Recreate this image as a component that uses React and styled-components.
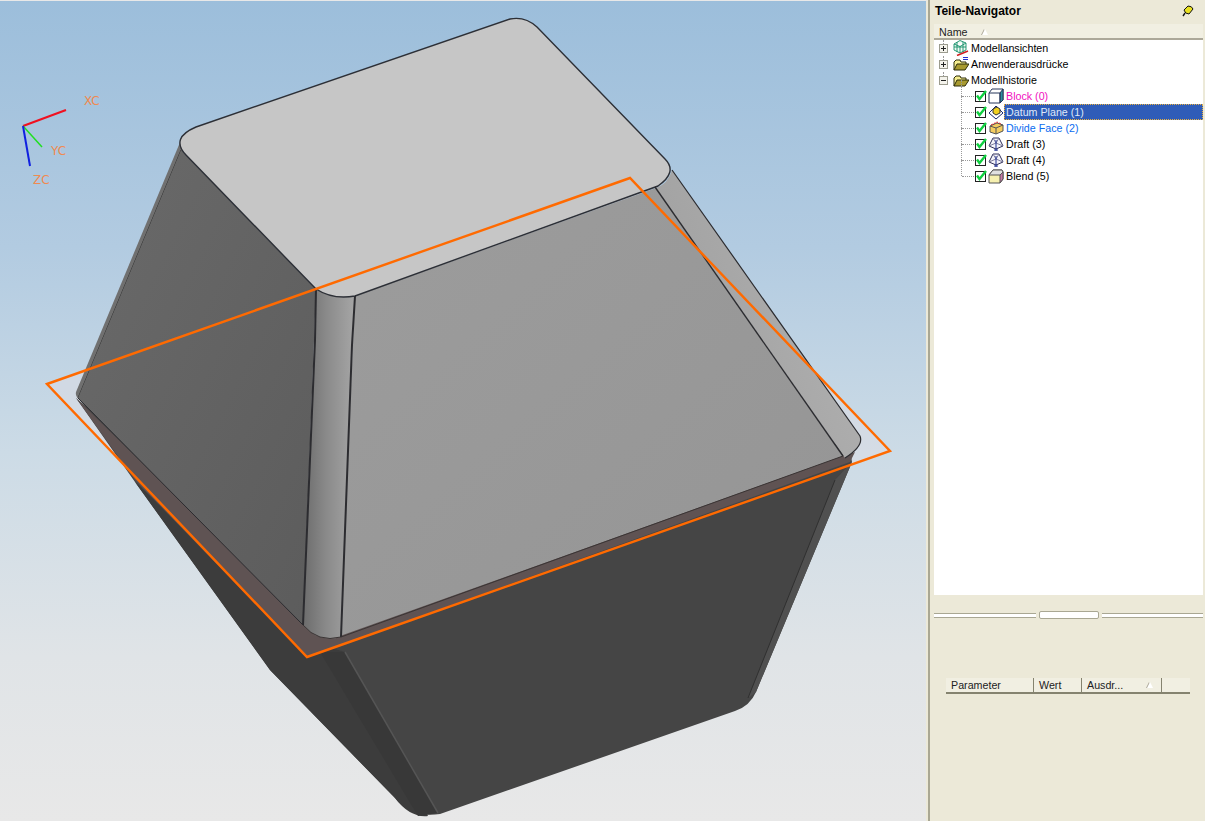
import styled, { createGlobalStyle } from "styled-components";

const GlobalStyle = createGlobalStyle`
  html, body {
    margin: 0;
    padding: 0;
    overflow: hidden;
    background: #ece9d8;
  }
`;

const Page = styled.div`
  display: flex;
  width: 1205px;
  height: 821px;
  font-family: Tahoma, "Liberation Sans", Arial, sans-serif;
  font-size: 10.7px;
  color: #000;
`;

const Viewport = styled.div`
  flex: 0 0 928px;
  height: 821px;
  border-top: 1px solid #e8e8e8;
  border-right: 2px solid #ece9d8;
  box-sizing: border-box;
`;

const Panel = styled.aside`
  flex: 1;
  display: flex;
  flex-direction: column;
  padding: 0 2px 0 4px;
  border-left: 2px solid #a9a793;
  background: #ece9d8;
  box-sizing: border-box;
`;

const TitleBar = styled.div`
  flex: 0 0 24px;
  display: flex;
  align-items: center;
  justify-content: space-between;
  padding: 0 9px 3px 1px;
  box-sizing: border-box;
  font-weight: 700;
  font-size: 12px;
`;

const ColumnHeader = styled.div`
  flex: 0 0 16px;
  display: flex;
  align-items: center;
  gap: 14px;
  padding: 1px 0 0 5px;
  box-sizing: border-box;
  border-bottom: 2px solid #aca899;
  background: #f1efe2;
  color: #222;
`;

const SortMark = styled.span`
  width: 0;
  height: 0;
  border-left: 3px solid transparent;
  border-right: 3px solid transparent;
  border-bottom: 6px solid #fff;
  filter: drop-shadow(-1px 0 0 #aca899);
`;

const Tree = styled.div`
  flex: 0 0 555px;
  background: #fff;
`;

const Row = styled.div`
  position: relative;
  display: flex;
  align-items: center;
  height: 16px;
  padding-left: ${(p) => (p.$child ? 41 : 5)}px;

  &::before {
    content: "";
    position: absolute;
    left: ${(p) => (p.$child ? 27 : 9)}px;
    top: ${(p) => (p.$child ? -8 : 0)}px;
    height: ${(p) => (p.$last ? 16 : p.$child ? 24 : 8)}px;
    border-left: 1px dotted #9a9a9a;
  }

  &::after {
    content: "";
    position: absolute;
    left: 28px;
    top: 8px;
    width: 12px;
    border-top: ${(p) => (p.$child ? "1px dotted #9a9a9a" : "none")};
  }
`;

const Expander = styled.span`
  position: relative;
  z-index: 1;
  flex: 0 0 9px;
  width: 9px;
  height: 9px;
  margin-right: 5px;
  box-sizing: border-box;
  border: 1px solid #9c9c8f;
  background: #f4f3ec;
  display: flex;
  align-items: center;
  justify-content: center;

  &::before {
    content: "";
    width: 5px;
    height: 1px;
    background: #222;
  }

  &::after {
    content: "";
    display: ${(p) => (p.$open ? "none" : "block")};
    position: absolute;
    left: 3px;
    top: 1px;
    width: 1px;
    height: 5px;
    background: #222;
  }
`;

const IconSlot = styled.span`
  flex: 0 0 16px;
  width: 16px;
  height: 16px;
  margin-right: ${(p) => (p.$tight ? 0 : 2)}px;
  display: block;

  svg {
    display: block;
  }
`;

const Label = styled.span`
  flex: ${(p) => (p.$selected ? 1 : "0 0 auto")};
  height: ${(p) => (p.$selected ? 16 : 14)}px;
  line-height: 14px;
  padding: 0 ${(p) => (p.$selected ? 2 : 0)}px;
  box-sizing: border-box;
  white-space: nowrap;
  color: ${(p) => p.$color || "#000"};
  background: ${(p) => (p.$selected ? "#2f5cb8" : "transparent")};
  outline: ${(p) => (p.$selected ? "1px dotted #e8b040" : "none")};
  outline-offset: -1px;
  ${(p) => (p.$selected ? "color: #dfe8f8; padding-top: 1px;" : "")}
`;

const Sash = styled.div`
  flex: 0 0 auto;
  display: flex;
  align-items: center;
  gap: 3px;
  margin-top: 16px;
  height: 8px;
`;

const SashLine = styled.div`
  flex: 1;
  height: 3px;
  border-top: 1px solid #a9a793;
  border-bottom: 1px solid #a9a793;
  background: #fff;
`;

const SashHandle = styled.div`
  flex: 0 0 58px;
  height: 6px;
  border: 1px solid #a9a793;
  border-radius: 2px;
  background: #fff;
`;

const TableHeader = styled.div`
  display: flex;
  margin: 59px 13px 0 12px;
  height: 16px;
  border-bottom: 2px solid #85836f;
  box-sizing: border-box;
`;

const HeaderCell = styled.div`
  flex: 0 0 ${(p) => p.$width}px;
  display: flex;
  align-items: center;
  justify-content: space-between;
  padding: 0 8px 0 5px;
  box-sizing: border-box;
  background: #f1efe2;
  border-right: ${(p) => (p.$end ? "none" : "1px solid #85836f")};
  color: #222;
`;

const Check = () => (
  <svg width="12" height="12" viewBox="0 0 12 12" style={{ flex: "0 0 12px", marginRight: 1 }}>
    <rect x="0.5" y="1.5" width="10" height="10" fill="#fff" stroke="#222" />
    <path d="M2 5.5 L4.5 9 L11 1" fill="none" stroke="#10d040" strokeWidth="2.4" />
  </svg>
);

const Svg = ({ children }) => (
  <svg width="16" height="16" viewBox="0 0 16 16">
    {children}
  </svg>
);

const ViewsIcon = () => (
  <Svg>
    <path
      d="M1 4 L7 0.5 L13 3 L13 10 L7 13 L1 10 Z M1 4 L7 6.5 L13 3 M7 6.5 L7 13 M4 2 L4 12 M10 2 L10 12 M1 7 L13 7"
      fill="#eefaf4"
      stroke="#14906a"
      strokeWidth="0.9"
    />
    <path d="M4 15.5 L15 11" stroke="#d02020" strokeWidth="1.6" />
  </Svg>
);

const FolderIcon = ({ lines }) => (
  <Svg>
    <path d="M1 14 L1 6 L3 4 L7 4 L8 6 L13 6 L13 8" fill="#f6ee90" stroke="#2c2c08" />
    <path d="M1 14 L4 8 L16 8 L12 14 Z" fill="#a89a30" stroke="#2c2c08" />
    {lines && <path d="M10 1.5 H15 M10 3.5 H15" stroke="#2030d0" />}
  </Svg>
);

const BlockIcon = () => (
  <Svg>
    <path d="M1 5 L4 1 L15 1 L15 12 L12 15 L1 15 Z" fill="#fff" stroke="#26365a" />
    <path d="M12 5 L15 1 L15 12 L12 15 Z" fill="#2a90a0" stroke="#26365a" />
    <path d="M1 5 L12 5 L12 15" fill="none" stroke="#26365a" />
  </Svg>
);

const DatumIcon = () => (
  <Svg>
    <path d="M1 9 L8 2 L15 9 L8 15 Z" fill="#fff" stroke="#1a2a70" />
    <path d="M5 5 L9 3 L12 5 L12 9 L8 11 L5 9 Z" fill="#f0d020" stroke="#333" />
  </Svg>
);

const DivideIcon = () => (
  <Svg>
    <path d="M2 6 L9 3 L15 5 L15 11 L8 14 L2 12 Z" fill="#f4cc60" stroke="#555" />
    <path d="M2 6 L8 8 L15 5 M8 8 L8 14" fill="none" stroke="#555" />
    <path d="M3 5 L9 2 L13 4" fill="none" stroke="#e02020" strokeDasharray="2 1" />
  </Svg>
);

const DraftIcon = () => (
  <Svg>
    <path d="M5 2 L11 2 L15 10 L8 13 L1 10 Z" fill="#f4f4fa" stroke="#30305a" />
    <path d="M5 2 L8 7 L11 2 M8 7 L1 10 M8 7 L15 10" fill="none" stroke="#8080a0" />
    <path d="M8 4 L8 15 M6 14 L10 14" stroke="#1a2a90" />
  </Svg>
);

const BlendIcon = () => (
  <Svg>
    <path d="M1 7 L5 2 L14 2 L15 4 L15 11 L12 15 L1 15 Z" fill="#f6f0b0" stroke="#555" />
    <path d="M5 2 L14 2 L15 4 L12 7 L1 7 Z" fill="#e0e0e0" stroke="#555" />
    <path d="M12 7 L15 4 L15 11 L12 15 Z" fill="#c878a8" stroke="#555" />
  </Svg>
);

const PinIcon = () => (
  <svg width="12" height="12" viewBox="0 0 12 12">
    <path d="M2 5 L6 1 Q10 1 11 4 L7 9 Q3 9 2 5 Z" fill="#e8e020" stroke="#111" />
    <path d="M3 8 L1 11" stroke="#111" strokeWidth="1.4" />
  </svg>
);

const rootRows = [
  { label: "Modellansichten", icon: <ViewsIcon /> },
  { label: "Anwenderausdrücke", icon: <FolderIcon lines /> },
  { label: "Modellhistorie", icon: <FolderIcon />, open: true },
];

const featureRows = [
  { label: "Block (0)", icon: <BlockIcon />, color: "#f010c0" },
  { label: "Datum Plane (1)", icon: <DatumIcon />, selected: true },
  { label: "Divide Face (2)", icon: <DivideIcon />, color: "#0a6cf0" },
  { label: "Draft (3)", icon: <DraftIcon /> },
  { label: "Draft (4)", icon: <DraftIcon /> },
  { label: "Blend (5)", icon: <BlendIcon />, last: true },
];

function Model() {
  return (
    <svg width="926" height="820" viewBox="0 1 926 820" style={{ display: "block" }}>
      <defs>
        <linearGradient id="sky" x1="0" y1="0" x2="0" y2="1">
          <stop offset="0" stopColor="#9cbedb" />
          <stop offset="0.3" stopColor="#b2cbe1" />
          <stop offset="0.55" stopColor="#ccdbe6" />
          <stop offset="0.8" stopColor="#e0e4e7" />
          <stop offset="1" stopColor="#e8e8e8" />
        </linearGradient>
        <linearGradient id="edgeStrip" x1="0" y1="0" x2="1" y2="0">
          <stop offset="0" stopColor="#6c6c6c" />
          <stop offset="0.45" stopColor="#8a8a8a" />
          <stop offset="1" stopColor="#a6a6a6" />
        </linearGradient>
        <linearGradient id="rightStrip" x1="0" y1="0" x2="1" y2="-0.5">
          <stop offset="0" stopColor="#a4a4a4" />
          <stop offset="0.7" stopColor="#b2b2b2" />
          <stop offset="1" stopColor="#8c8c8c" />
        </linearGradient>
        <linearGradient id="leftFace" x1="0" y1="0" x2="1" y2="1">
          <stop offset="0" stopColor="#6a6a6a" />
          <stop offset="1" stopColor="#5c5c5c" />
        </linearGradient>
        <linearGradient id="frontFace" x1="0" y1="0" x2="1" y2="1">
          <stop offset="0" stopColor="#9c9c9c" />
          <stop offset="1" stopColor="#959595" />
        </linearGradient>
      </defs>
      <rect x="0" y="0" width="926" height="821" fill="url(#sky)" />

      {/* datum plane fill behind the part */}
      <path d="M47 384 L630 178 L890 451 L307 657 Z" fill="#dcdce4" fillOpacity="0.55" />

      {/* lower body */}
      <path
        d="M76 398 L135 482 L270 670 L395 798 Q410 818 440 814 L735 711 Q750 706 756 692 L852 462 L848 440 L320 600 Z"
        fill="#454545"
      />
      <path d="M135 482 L270 670 L395 798 Q410 818 428 816 L345 652 L305 640 Z" fill="#3c3c3c" />
      <path d="M320 652 L345 652 L438 813 L418 816 Z" fill="#383838" />
      <path d="M345 652 L438 813" stroke="#555" strokeWidth="1.5" fill="none" />
      <path d="M835 480 L748 698 L756 692 L852 462 Z" fill="#505050" />
      <path d="M835 480 L748 698" stroke="#303030" strokeWidth="1" fill="none" />

      {/* brown band under the blend */}
      <path d="M76 398 L135 480 L307 657 L850 462 L855 452 L340 630 L302 620 Z" fill="#5f5353" />

      {/* side sliver on the left */}
      <path d="M181 140 L76 392 Q75 397 80 400 L190 160 Z" fill="#707070" />
      <path d="M181 150 L78 398" stroke="#333" strokeWidth="1" fill="none" />

      {/* left facet */}
      <path d="M181 150 L316 289 L303 625 L78 398 Z" fill="url(#leftFace)" />

      {/* front facet */}
      <path d="M355 296 L656 188 L843 456 L340 636 Z" fill="url(#frontFace)" />

      {/* blended edges */}
      <path d="M316 289 Q335 300 355 296 L341 637 Q318 643 303 625 Z" fill="url(#edgeStrip)" />
      <path d="M672 170 L860 436 Q864 446 845 458 L656 188 Q668 184 672 170 Z" fill="url(#rightStrip)" />

      {/* top face */}
      <path
        d="M196 127 L510 19 Q525 16 537 27 L665 159 Q678 172 658 186 L355 296 Q333 300 316 289 L186 155 Q170 138 196 127 Z"
        fill="#c6c6c6"
        stroke="#2c2f36"
        strokeWidth="1.4"
      />

      {/* feature lines */}
      <g fill="none" stroke="#2c2c30">
        <path d="M316 289 L315 340 L303 625" strokeWidth="2" />
        <path d="M355 296 L352 345 L341 637" strokeWidth="2" />
        <path d="M655 187 L843 456" strokeWidth="1.4" />
        <path d="M672 170 L860 436 Q864 446 845 458" strokeWidth="1.2" />
        <path d="M78 398 L303 625" strokeWidth="1" />
        <path d="M303 625 Q318 643 341 637 L843 456" strokeWidth="1" stroke="#3a3434" />
      </g>

      {/* datum plane outline */}
      <path d="M47 384 L630 178 L890 451 L307 657 Z" fill="none" stroke="#ff6a00" strokeWidth="2.4" />

      {/* triad */}
      <g fill="none" strokeWidth="2">
        <path d="M23 126 L66 110" stroke="#f01020" />
        <path d="M23 126 L42 147" stroke="#20e020" strokeWidth="1.5" />
        <path d="M23 126 L30 166" stroke="#1020e0" />
      </g>
      <g fill="#f08a50" fontFamily="'DejaVu Sans', sans-serif" fontSize="12">
        <text x="84" y="105">XC</text>
        <text x="51" y="155">YC</text>
        <text x="33" y="184">ZC</text>
      </g>
    </svg>
  );
}

export default function App() {
  return (
    <Page>
      <GlobalStyle />
      <Viewport>
        <Model />
      </Viewport>
      <Panel>
        <TitleBar>
          <span>Teile-Navigator</span>
          <PinIcon />
        </TitleBar>
        <ColumnHeader>
          <span>Name</span>
          <SortMark />
        </ColumnHeader>
        <Tree>
          {rootRows.map((row) => (
            <Row key={row.label}>
              <Expander $open={row.open} />
              <IconSlot>{row.icon}</IconSlot>
              <Label>{row.label}</Label>
            </Row>
          ))}
          {featureRows.map((row) => (
            <Row key={row.label} $child $last={row.last}>
              <Check />
              <IconSlot $tight={row.selected}>{row.icon}</IconSlot>
              <Label $color={row.color} $selected={row.selected}>
                {row.label}
              </Label>
            </Row>
          ))}
        </Tree>
        <Sash>
          <SashLine />
          <SashHandle />
          <SashLine />
        </Sash>
        <TableHeader>
          <HeaderCell $width={88}>Parameter</HeaderCell>
          <HeaderCell $width={48}>Wert</HeaderCell>
          <HeaderCell $width={80}>
            Ausdr...
            <SortMark />
          </HeaderCell>
          <HeaderCell $width={28} $end />
        </TableHeader>
      </Panel>
    </Page>
  );
}
